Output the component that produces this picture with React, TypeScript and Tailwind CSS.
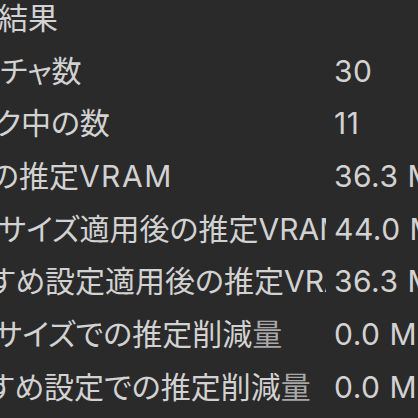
import React from "react"

interface Row {
    label: React.ReactNode
    offset: string
    value: string
}

const rows: Row[] = [
    { label: "チャ数", offset: "ml-0", value: "30" },
    { label: "ク中の数", offset: "ml-[-6px]", value: "11" },
    { label: <>の推定<span className="tracking-[1.5px]">VRAM</span></>, offset: "ml-[-10px]", value: "36.3 MB" },
    { label: "サイズ適用後の推定VRAM", offset: "ml-[-2px]", value: "44.0 MB" },
    { label: "すめ設定適用後の推定VRAM", offset: "ml-[-12px]", value: "36.3 MB" },
    {
        label: (
            <>
                サイズでの推定削減<span className="text-[#a8a8a8]">量</span>
            </>
        ),
        offset: "ml-[-6px]",
        value: "0.0 MB",
    },
    {
        label: (
            <>
                すめ設定での推定削減<span className="text-[#a8a8a8]">量</span>
            </>
        ),
        offset: "ml-[-13px]",
        value: "0.0 MB",
    },
]

export default function App() {
    return (
        <div
            className="w-[418px] h-[418px] overflow-hidden bg-[#2a2a2a] text-[#d2d2d2] text-[30px] [font-feature-settings:'palt'] whitespace-nowrap"
            style={{ fontFamily: "Inter, 'Noto Sans CJK JP', sans-serif" }}
        >
            <div className="-mt-[8px]">
                <div className="h-[52.7px] flex items-center overflow-hidden">
                    <span className="ml-[-2px]">結果</span>
                </div>
                {rows.map((row, i) => (
                    <div key={i} className="h-[52.7px] flex items-center">
                        <div className="w-[326px] shrink-0 overflow-hidden">
                            <span className={`block ${row.offset}`}>{row.label}</span>
                        </div>
                        <div className="pl-[8px] tracking-[0.5px]">{row.value}</div>
                    </div>
                ))}
            </div>
        </div>
    )
}
